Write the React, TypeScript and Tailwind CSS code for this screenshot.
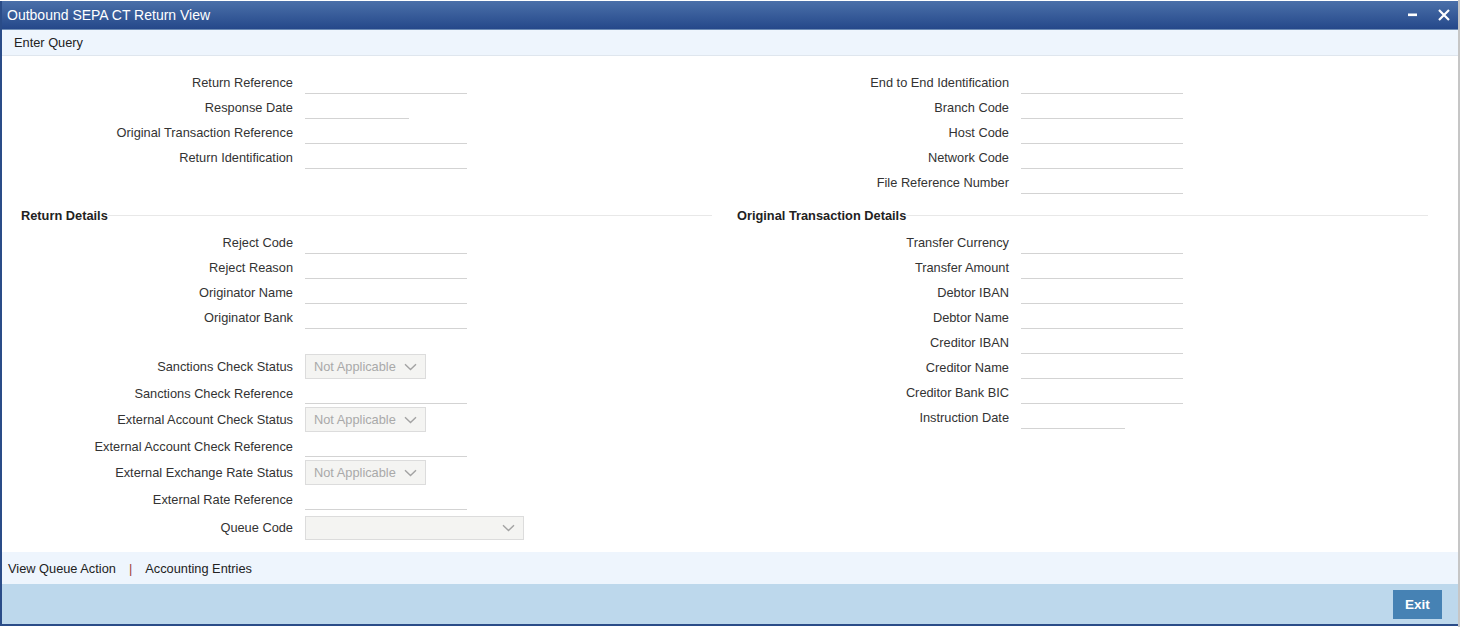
import React from "react";

const Chevron = () => (
  <svg width="13" height="8" viewBox="0 0 13 8" fill="none">
    <path d="M1 1.2 L6.5 6.5 L12 1.2" stroke="#a3a3a3" strokeWidth="1.4" />
  </svg>
);

const Input = ({ w = 162 }: { w?: number }) => (
  <div
    className={`h-[24px] border-b border-[#d3d3d3] ${w === 162 ? "w-[162px]" : "w-[104px]"}`}
  />
);

const Label = ({ children }: { children: React.ReactNode }) => (
  <div className="w-[291px] text-right pt-[2px] text-[#333] whitespace-nowrap">{children}</div>
);

const RLabel = ({ children }: { children: React.ReactNode }) => (
  <div className="w-[292px] text-right pt-[2px] text-[#333] whitespace-nowrap">{children}</div>
);

const Row = ({ label, w = 162, right = false }: { label: string; w?: number; right?: boolean }) => (
  <div className="h-[25px] flex items-start">
    <div className="h-[25px] flex items-center">
      {right ? <RLabel>{label}</RLabel> : <Label>{label}</Label>}
    </div>
    <div className="ml-[12px]">
      <Input w={w} />
    </div>
  </div>
);

const SelectRow = ({ label }: { label: string }) => (
  <div className="h-[26px] flex items-start">
    <div className="h-[25px] flex items-center">
      <Label>{label}</Label>
    </div>
    <div className="ml-[12px] w-[121px] h-[25px] border border-[#dcdcdc] bg-[#f4f4f2] flex items-center justify-between pl-[8px] pr-[8px] text-[#a9a9a9]">
      <span className="pt-[2px]">Not Applicable</span>
      <Chevron />
    </div>
  </div>
);

const RefRow = ({ label }: { label: string }) => (
  <div className="h-[27px] flex items-start">
    <div className="h-[27px] flex items-center">
      <Label>{label}</Label>
    </div>
    <div className="ml-[12px]">
      <Input />
    </div>
  </div>
);

const Heading = ({ children, left }: { children: React.ReactNode; left: boolean }) => (
  <div className={`h-[20px] flex items-center ${left ? "pl-[19px] mr-[5px]" : "pl-[20px] mr-[5px]"}`}>
    <span className="font-bold text-[#222] whitespace-nowrap pt-[2px]">{children}</span>
    <div className="flex-1 h-px bg-[#e8e8e8] mt-[1px]" />
  </div>
);

export default function App() {
  return (
    <div className="flex w-[1462px] h-[627px] bg-white font-['Liberation_Sans',Arial,sans-serif] text-[12.8px] leading-none">
      <div className="w-[1458px] h-[625px] mt-[1px] border-l-2 border-b-2 border-[#2a4c88] flex flex-col">
        {/* Title bar */}
        <div className="h-[29px] bg-linear-to-b from-[#4b70a9] to-[#25488a] border-b border-[#6f8db5] flex items-center justify-between pl-[5px]">
          <span className="text-white text-[14px]">Outbound SEPA CT Return View</span>
          <div className="flex items-center">
            <svg width="10" height="4" viewBox="0 0 10 4" className="mr-[20px]">
              <rect x="0" y="0.5" width="9" height="2.6" fill="#fff" />
            </svg>
            <svg width="12" height="12" viewBox="0 0 12 12" className="mr-[8px]">
              <path d="M1 1 L11 11 M11 1 L1 11" stroke="#fff" strokeWidth="2.2" />
            </svg>
          </div>
        </div>
        {/* Enter Query */}
        <div className="h-[26px] bg-[#eef5fd] border-b border-[#dfe6ee] pl-[12px] pt-[2px] flex items-center text-[#222]">
          Enter Query
        </div>
        {/* Form */}
        <div className="h-[496px] flex flex-col">
          <div className="flex pt-[14px]">
            <div className="w-[715px] flex flex-col">
              <Row label="Return Reference" />
              <Row label="Response Date" w={104} />
              <Row label="Original Transaction Reference" />
              <Row label="Return Identification" />
            </div>
            <div className="w-[716px] flex flex-col">
              <Row right label="End to End Identification" />
              <Row right label="Branch Code" />
              <Row right label="Host Code" />
              <Row right label="Network Code" />
              <Row right label="File Reference Number" />
            </div>
          </div>
          <div className="flex mt-[10px]">
            <div className="w-[715px] flex flex-col">
              <Heading left>Return Details</Heading>
              <div className="mt-[5px] flex flex-col">
                <Row label="Reject Code" />
                <Row label="Reject Reason" />
                <Row label="Originator Name" />
                <Row label="Originator Bank" />
                <div className="h-[24px]" />
                <SelectRow label="Sanctions Check Status" />
                <RefRow label="Sanctions Check Reference" />
                <SelectRow label="External Account Check Status" />
                <RefRow label="External Account Check Reference" />
                <SelectRow label="External Exchange Rate Status" />
                <RefRow label="External Rate Reference" />
                <div className="mt-[1px] h-[26px] flex items-center">
                  <Label>Queue Code</Label>
                  <div className="ml-[12px] mt-[2px] w-[219px] h-[24px] border border-[#dcdcdc] bg-[#f4f4f2] flex items-center justify-end pr-[8px]">
                    <Chevron />
                  </div>
                </div>
              </div>
            </div>
            <div className="w-[716px] flex flex-col">
              <Heading left={false}>Original Transaction Details</Heading>
              <div className="mt-[5px] flex flex-col">
                <Row right label="Transfer Currency" />
                <Row right label="Transfer Amount" />
                <Row right label="Debtor IBAN" />
                <Row right label="Debtor Name" />
                <Row right label="Creditor IBAN" />
                <Row right label="Creditor Name" />
                <Row right label="Creditor Bank BIC" />
                <Row right label="Instruction Date" w={104} />
              </div>
            </div>
          </div>
        </div>
        {/* Link bar */}
        <div className="h-[32px] bg-[#eef5fd] flex items-center pl-[6px] pt-[2px] text-[#222]">
          <span>View Queue Action</span>
          <span className="ml-[13px] text-[#a0433c]">|</span>
          <span className="ml-[13px]">Accounting Entries</span>
        </div>
        {/* Footer */}
        <div className="h-[40px] bg-[#bdd8ec] flex items-center justify-end pr-[16px]">
          <div className="w-[49px] h-[29px] bg-[#4682b4] text-white font-bold text-[13.5px] pt-[2px] flex items-center justify-center">
            Exit
          </div>
        </div>
      </div>
      <div className="w-[2px] h-full bg-[#c6c6c6]" />
      <div className="flex-1" />
    </div>
  );
}
